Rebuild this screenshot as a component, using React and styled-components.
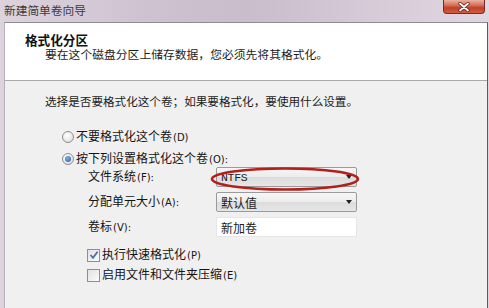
import React from 'react'
import styled, { createGlobalStyle } from 'styled-components'

const Global = createGlobalStyle`
  html, body {
    margin: 0;
    padding: 0;
    overflow: hidden;
    font-family: "Noto Sans CJK SC", "Liberation Sans", sans-serif;
    font-size: 12px;
    color: #1c1c1c;
  }
  * { box-sizing: border-box; }
`

const Window = styled.div`
  width: 489px;
  height: 308px;
  display: flex;
  flex-direction: column;
  background: linear-gradient(90deg, #dcd3dd 0%, #cec2d0 30%, #c9bccb 50%, #d6cad7 75%, #e0d6e0 100%);
`

const TitleBar = styled.div`
  height: 22px;
  display: flex;
  align-items: flex-start;
  padding-left: 4px;
`

const Title = styled.div`
  font-size: 11.7px;
  line-height: 20px;
  color: #3a3a3a;
`

const CloseButton = styled.div`
  margin-left: auto;
  margin-right: 4px;
  width: 42px;
  height: 14px;
  border: 1px solid #7a2a24;
  border-top: none;
  border-radius: 0 0 4px 4px;
  background: linear-gradient(180deg, #eab0a0 0%, #d6705a 40%, #c04028 60%, #d65c40 100%);
  display: flex;
  align-items: center;
  justify-content: center;
`

const Frame = styled.div`
  flex: 1;
  display: flex;
  padding: 0 1px 0 4px;
`

const Client = styled.div`
  flex: 1;
  display: flex;
  flex-direction: column;
  border-top: 1px solid #8c8c94;
  border-left: 1px solid #b8b0bc;
  border-right: 1px solid #5a5a62;
  background: #f0f0f0;
  position: relative;
`

const Header = styled.div`
  height: 58px;
  background: #ffffff;
  border-bottom: 1px solid #a9a9a9;
  padding: 11px 0 0 20px;
`

const Heading = styled.div`
  font-weight: bold;
  font-size: 12.6px;
  line-height: 12px;
  color: #111;
`

const Subtitle = styled.div`
  font-size: 11.8px;
  line-height: 12px;
  margin-top: 2px;
  padding-left: 20px;
  color: #1c1c1c;
`

const Body = styled.div`
  flex: 1;
  padding: 12px 0 0 40px;
`

const Intro = styled.div`
  font-size: 11.6px;
  line-height: 16px;
  margin-bottom: 17px;
`

const OptionRow = styled.div`
  display: flex;
  align-items: center;
  height: 22px;
  padding-left: ${p => p.$indent || 0}px;
  gap: 2px;
`

const Radio = styled.span`
  width: 12px;
  height: 12px;
  border-radius: 50%;
  border: 1px solid #8f8f8f;
  background: radial-gradient(circle at 40% 35%, #ffffff 0%, #e4e4e4 70%, #cfcfcf 100%);
  display: flex;
  align-items: center;
  justify-content: center;
  &::after {
    content: '';
    width: 6px;
    height: 6px;
    border-radius: 50%;
    background: ${p => (p.$checked ? 'radial-gradient(circle at 40% 35%, #7fb0e8, #2458a4)' : 'transparent')};
  }
`

const Check = styled.span`
  width: 13px;
  height: 13px;
  border: 1px solid #8e8f8f;
  background: linear-gradient(135deg, #e2e2e2, #fafafa);
  display: flex;
  align-items: center;
  justify-content: center;
`

const Mnemonic = styled.span`
  font-family: "DejaVu Sans", sans-serif;
  font-size: 10px;
  margin-left: 1px;
`

const Label = styled.span`
  font-size: 12px;
  line-height: 16px;
  color: #141414;
`

const Form = styled.div`
  display: grid;
  grid-template-columns: 128px 141px;
  row-gap: 5px;
  padding-left: 43px;
  margin-top: -3px;
  align-items: center;
`

const Field = styled.div`
  height: 20px;
  display: flex;
  align-items: center;
  padding: 0 4px;
  border: 1px solid ${p => (p.$input ? '#e6e6e6' : '#9a9a9a')};
  border-radius: ${p => (p.$input ? '0' : '2px')};
  background: ${p => (p.$input ? '#ffffff' : 'linear-gradient(180deg, #f6f6f6 0%, #ececec 50%, #dcdcdc 51%, #e6e6e6 100%)')};
  font-size: 12px;
`

const Mono = styled.span`
  font-family: "Liberation Mono", "DejaVu Sans Mono", monospace;
  font-size: 11.5px;
  letter-spacing: -0.3px;
`

const Arrow = styled.span`
  margin-left: auto;
  width: 0;
  height: 0;
  border-left: 3.5px solid transparent;
  border-right: 3.5px solid transparent;
  border-top: 4px solid #222;
`

const Checks = styled.div`
  margin-top: 8px;
  padding-left: 42px;
  display: flex;
  flex-direction: column;
`

const CheckRow = styled.div`
  display: flex;
  align-items: center;
  height: 20px;
  gap: 2px;
`

const Ellipse = styled.svg`
  position: absolute;
  left: 202px;
  top: 142px;
  pointer-events: none;
`

const Tick = () => (
  <svg width="10" height="10" viewBox="0 0 10 10">
    <path d="M1.5 5 L4 7.8 L8.6 1.8" fill="none" stroke="#4a6fa5" strokeWidth="1.8" />
  </svg>
)

const CloseX = () => (
  <svg width="12" height="10" viewBox="0 0 12 10">
    <path d="M2 1.5 L10 8.5 M10 1.5 L2 8.5" stroke="#5a1a12" strokeWidth="3.2" strokeLinecap="round" />
    <path d="M2 1.5 L10 8.5 M10 1.5 L2 8.5" stroke="#ffffff" strokeWidth="1.8" strokeLinecap="round" />
  </svg>
)

export default function App() {
  return (
    <>
      <Global />
      <Window>
        <TitleBar>
          <Title>新建简单卷向导</Title>
          <CloseButton><CloseX /></CloseButton>
        </TitleBar>
        <Frame>
          <Client>
            <Header>
              <Heading>格式化分区</Heading>
              <Subtitle>要在这个磁盘分区上储存数据，您必须先将其格式化。</Subtitle>
            </Header>
            <Body>
              <Intro>选择是否要格式化这个卷；如果要格式化，要使用什么设置。</Intro>
              <OptionRow $indent={17}>
                <Radio />
                <Label>不要格式化这个卷<Mnemonic>(D)</Mnemonic></Label>
              </OptionRow>
              <OptionRow $indent={17}>
                <Radio $checked />
                <Label>按下列设置格式化这个卷<Mnemonic>(O):</Mnemonic></Label>
              </OptionRow>
              <Form>
                <Label>文件系统<Mnemonic>(F):</Mnemonic></Label>
                <Field><Mono>NTFS</Mono><Arrow /></Field>
                <Label>分配单元大小<Mnemonic>(A):</Mnemonic></Label>
                <Field>默认值<Arrow /></Field>
                <Label>卷标<Mnemonic>(V):</Mnemonic></Label>
                <Field $input>新加卷</Field>
              </Form>
              <Checks>
                <CheckRow>
                  <Check><Tick /></Check>
                  <Label>执行快速格式化<Mnemonic>(P)</Mnemonic></Label>
                </CheckRow>
                <CheckRow>
                  <Check />
                  <Label>启用文件和文件夹压缩<Mnemonic>(E)</Mnemonic></Label>
                </CheckRow>
              </Checks>
            </Body>
            <Ellipse width="160" height="30" viewBox="0 0 160 30">
              <ellipse cx="78" cy="14" rx="73" ry="10.5" fill="none" stroke="#b3201c" strokeWidth="2.6" />
            </Ellipse>
          </Client>
        </Frame>
      </Window>
    </>
  )
}
